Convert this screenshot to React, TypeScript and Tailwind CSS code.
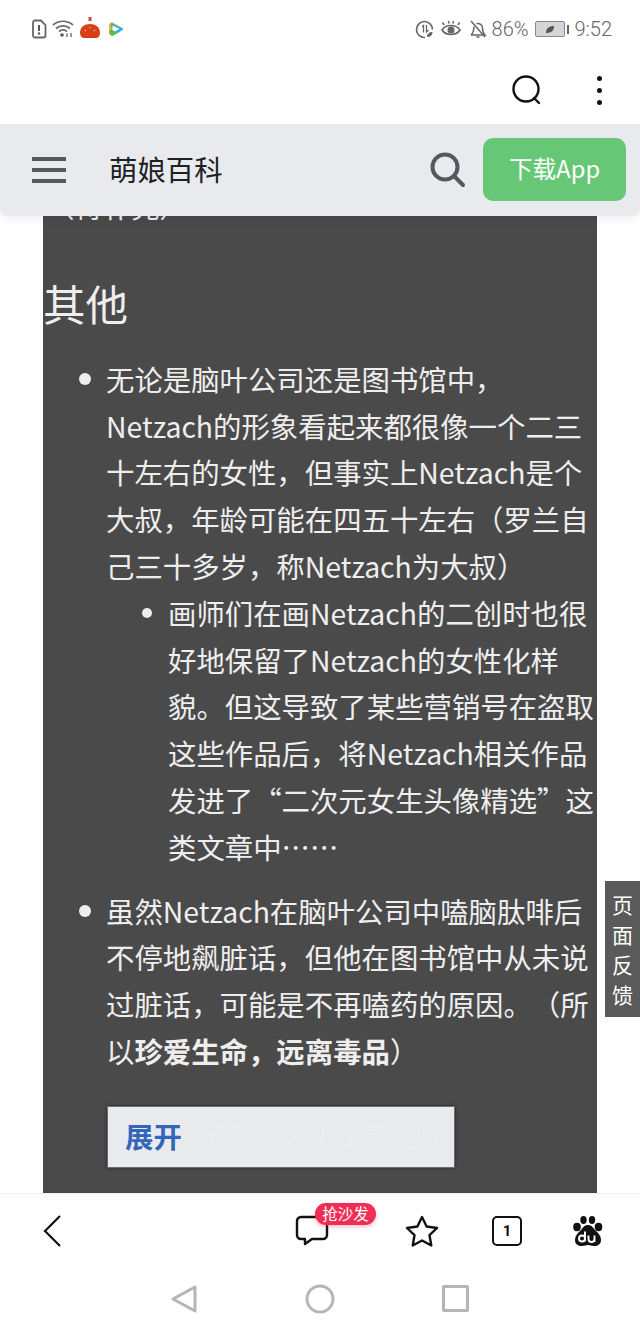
const cjk = "font-['Noto_Sans_CJK_SC','Noto_Sans',sans-serif]";

const StatusBar = () => (
  <div className="flex h-[58px] items-center justify-between pl-[31px] pr-[28px] text-[#666666]">
    <div className="flex items-center gap-[5px]">
      <svg width="16" height="20" viewBox="0 0 16 20" fill="none">
        <path d="M2 3.500a2 2 0 0 1 2-2h6l4.500 4.500v10.500a2 2 0 0 1-2 2h-8.500a2 2 0 0 1-2-2z" stroke="#666" strokeWidth="1.800" />
        <path d="M8 6v6" stroke="#555" strokeWidth="2" />
        <circle cx="8" cy="14.500" r="1.200" fill="#555" />
      </svg>
      <svg width="22" height="20" viewBox="0 0 22 20" fill="none" stroke="#666" strokeWidth="1.700">
        <path d="M1 6c5.500-5 14.500-5 20 0" />
        <path d="M4 9.500c4-3.500 10-3.500 14 0" />
        <path d="M7 12.500c2.500-2 5.500-2 8 0" />
        <circle cx="10" cy="16" r="1.800" fill="#555" stroke="none" />
        <path d="M15 14.500v3.500M19 14v4" strokeWidth="1.300" />
      </svg>
      <svg width="22" height="22" viewBox="0 0 22 22" className="-mt-[3px]">
        <rect x="9.500" y="0" width="3" height="4" fill="#d8482c" />
        <path d="M1 16c0-6 4.500-9 10-9s10 3 10 9c0 3-2 5-4 5h-12c-2 0-4-2-4-5z" fill="#d93f17" />
        <path d="M6 14l1-1M11 11v-1M16 14l-1-1" stroke="#f6c9a8" strokeWidth="1.200" />
      </svg>
      <svg width="16" height="16" viewBox="0 0 16 16" className="ml-[2px]">
        <path d="M1 3l3-2 11 6.500v1L4 15l-3-2z" fill="#f5b324" />
        <path d="M3 2l12 5.500v1L10 12 3 6z" fill="#27b3e8" />
        <path d="M4.500 4.500l7 3.500-7 3.500z" fill="#fff" />
        <path d="M2 8l8 4-6 3-2-2z" fill="#4dbb5f" />
      </svg>
    </div>
    <div className="flex items-center">
      <svg width="19" height="19" viewBox="0 0 19 19" fill="none" stroke="#666" strokeWidth="1.700">
        <path d="M10 17.500a8 8 0 1 1 7.500-8" />
        <path d="M7 6.500l1.500-1v7M11.500 5v7l2-2" strokeWidth="1.300" />
        <path d="M12 17c0-3 2-5 5.500-5 0 3-2 5-5.500 5z" fill="#666" stroke="none" />
      </svg>
      <svg width="20" height="18" viewBox="0 0 20 18" fill="none" stroke="#666" strokeWidth="1.700" className="ml-[7px]">
        <path d="M1 10c4-6 14-6 18 0-4 6-14 6-18 0z" />
        <circle cx="10" cy="10" r="3.500" fill="#666" stroke="none" />
        <path d="M3 5L1.500 2.500M8 3.500L7.500 1M12 3.500L12.500 1M17 5l1.500-2.500" strokeWidth="1.500" />
      </svg>
      <svg width="18" height="18" viewBox="0 0 18 18" fill="none" stroke="#666" strokeWidth="1.500" className="ml-[8px]">
        <path d="M2 15h14c-2-2-2.500-3-2.500-7a4.500 4.500 0 0 0-6-4.200M5 6.500C4.800 10 4.500 13 2 15" />
        <path d="M7.500 17h3M2 1l14 16" />
      </svg>
      <span className="ml-[5px] font-['Roboto',sans-serif] text-[20px] font-light leading-none">86%</span>
      <div className="ml-[6px] flex items-center gap-[2px]">
        <div className="flex h-[16px] w-[30px] items-center justify-center rounded-[2px] border border-[#888888] bg-[#d5d5d5]">
          <svg width="10" height="9" viewBox="0 0 10 9"><path d="M1 8C1 3 4 1 9 1c0 5-3 7-8 7z" fill="#555" /></svg>
        </div>
        <div className="h-[9px] w-[2px] bg-[#666666]" />
      </div>
      <span className="ml-[6px] font-['Roboto',sans-serif] text-[20px] font-light leading-none">9:52</span>
    </div>
  </div>
);

const BrowserTop = () => (
  <div className="flex h-[66px] items-center justify-end pb-[2px] pr-[23px]">
    <svg width="30" height="30" viewBox="0 0 30 30" fill="none" stroke="#111" strokeWidth="2.400" strokeLinecap="round" className="mr-[39px]">
      <circle cx="14" cy="14" r="12.500" />
      <path d="M22 23l5 5" />
    </svg>
    <div className="flex w-[36px] flex-col items-center gap-[7px]">
      <div className="h-[5px] w-[5px] rounded-full bg-[#111111]" />
      <div className="h-[5px] w-[5px] rounded-full bg-[#111111]" />
      <div className="h-[5px] w-[5px] rounded-full bg-[#111111]" />
    </div>
  </div>
);

const SiteNav = () => (
  <div className="relative z-10 flex h-[92px] items-center rounded-b-[8px] bg-[#e8eaee] pl-[32px] pr-[14px] shadow-[0_4px_8px_rgba(0,0,0,0.06)]">
    <div className="flex w-[34px] flex-col gap-[7px]">
      <div className="h-[4px] bg-[#54595d]" />
      <div className="h-[4px] bg-[#54595d]" />
      <div className="h-[4px] bg-[#54595d]" />
    </div>
    <span className={`-mt-[2px] ml-[43px] text-[28.400px] leading-none text-[#202122] ${cjk}`}>萌娘百科</span>
    <svg width="36" height="36" viewBox="0 0 36 36" fill="none" stroke="#54595d" strokeWidth="4" strokeLinecap="round" className="ml-auto mr-[17px]">
      <circle cx="15" cy="15" r="12.500" />
      <path d="M24 24l9 9" />
    </svg>
    <div className={`mb-[2px] flex h-[63px] w-[143px] items-center justify-center rounded-[10px] bg-[#66c776] text-[23.700px] text-white ${cjk}`}>
      下载App
    </div>
  </div>
);

const Article = () => (
  <div className={`ml-[43px] h-full w-[554px] overflow-hidden bg-[#4a4a4a] text-[28.400px] leading-[46.800px] text-[#eeeeee] [text-spacing-trim:space-all] ${cjk}`}>
    <p className="-mt-[33px] whitespace-nowrap pl-[3px]">（待补完）</p>
    <h2 className="mt-[45px] whitespace-nowrap text-[42.500px] leading-[56px]">其他</h2>
    <ul className="mt-[25px] list-none whitespace-nowrap pl-[63px]">
      <li className="relative">
        <span className="absolute -left-[27px] top-[17px] h-[12px] w-[12px] rounded-full bg-[#eeeeee]" />
        无论是脑叶公司还是图书馆中，<br />
        Netzach的形象看起来都很像一个二三<br />
        十左右的女性，但事实上Netzach是个<br />
        大叔，年龄可能在四五十左右（罗兰自<br />
        己三十多岁，称Netzach为大叔）
        <ul className="list-none pl-[62px]">
          <li className="relative">
            <span className="absolute -left-[26px] top-[18px] h-[10px] w-[10px] rounded-full bg-[#eeeeee]" />
            画师们在画Netzach的二创时也很<br />
            好地保留了Netzach的女性化样<br />
            貌。但这导致了某些营销号在盗取<br />
            这些作品后，将Netzach相关作品<br />
            发进了“二次元女生头像精选”这<br />
            类文章中……
          </li>
        </ul>
      </li>
      <li className="relative mt-[17px]">
        <span className="absolute -left-[27px] top-[17px] h-[12px] w-[12px] rounded-full bg-[#eeeeee]" />
        虽然Netzach在脑叶公司中嗑脑肽啡后<br />
        不停地飙脏话，但他在图书馆中从未说<br />
        过脏话，可能是不再嗑药的原因。（所<br />
        以<b className="font-bold">珍爱生命，远离毒品</b>）
      </li>
    </ul>
    <div className="ml-[64px] mt-[31px] flex h-[62px] w-[348px] items-center overflow-hidden whitespace-nowrap border border-[#6a6e72] bg-[#e8eaee] pl-[17px] shadow-[0_0_3px_rgba(0,0,0,0.5)]">
      <b className="font-bold text-[#3366bb]">展开</b>
      <b className="ml-[6px] font-bold text-[#eaecf0]">小孩子不可以学他哦</b>
    </div>
  </div>
);

const BottomBar = () => (
  <div className="relative flex h-[75px] items-center border-t border-[#f0f0f0] bg-white">
    <svg width="20" height="34" viewBox="0 0 20 34" fill="none" stroke="#111" strokeWidth="2.200" className="ml-[42px]">
      <path d="M18 2L3 17l15 15" />
    </svg>
    <div className="relative ml-[233px]">
      <svg width="34" height="32" viewBox="0 0 34 32" fill="none" stroke="#111" strokeWidth="2.400" strokeLinejoin="round">
        <path d="M6 2h22a4 4 0 0 1 4 4v14a4 4 0 0 1-4 4H17l-7 5v-5H6a4 4 0 0 1-4-4V6a4 4 0 0 1 4-4z" />
      </svg>
      <span className={`absolute -top-[12px] left-[20px] flex h-[22px] w-[61px] items-center justify-center rounded-full bg-[#f02d55] text-[15.500px] leading-none text-white shadow-[0_2px_4px_rgba(240,45,85,0.3)] ${cjk}`}>
        抢沙发
      </span>
    </div>
    <svg width="34" height="32" viewBox="0 0 34 32" fill="none" stroke="#111" strokeWidth="2.400" strokeLinejoin="round" className="ml-[76px]">
      <path d="M17 2l4.600 9.500 10.400 1.500-7.500 7.200 1.800 10.300L17 25.500 7.700 30.500l1.800-10.300L2 13l10.400-1.500z" />
    </svg>
    <div className="ml-[53px] flex h-[30px] w-[30px] items-center justify-center rounded-[5px] border-[2.400px] border-[#111111] font-['Roboto',sans-serif] text-[15px] font-bold leading-none text-[#111111]">
      1
    </div>
    <svg width="30" height="30" viewBox="0 0 30 30" className="ml-[51px]">
      <ellipse cx="4" cy="11" rx="3.800" ry="4.200" fill="#111" />
      <ellipse cx="10.500" cy="4" rx="3.200" ry="4" fill="#111" />
      <ellipse cx="19" cy="4" rx="3.200" ry="4" fill="#111" />
      <ellipse cx="25.500" cy="11" rx="3.800" ry="4.200" fill="#111" />
      <path d="M15 9c4 0 5 3 8 6 3 3 5 5 5 9 0 4-3 6-7 6-3 0-4-1-6-1s-3 1-6 1c-4 0-7-2-7-6 0-4 2-6 5-9 3-3 4-6 8-6z" fill="#111" />
      <path d="M12 15.500v10M12 22.500a3 3 0 1 1-6 0 3 3 0 1 1 6 0zM15.500 19.500v3.500a3 3 0 0 0 6 0v-3.500M21.500 23v3" fill="none" stroke="#fff" strokeWidth="1.900" />
    </svg>
  </div>
);

const NavKeys = () => (
  <div className="flex h-[62px] items-start justify-center bg-white pl-[2px]">
    <svg width="28" height="30" viewBox="0 0 28 30" fill="none" stroke="#b5b5b5" strokeWidth="3" strokeLinejoin="round" className="-ml-[3px] mt-[16px]">
      <path d="M25 3v24L3 15z" />
    </svg>
    <svg width="30" height="30" viewBox="0 0 30 30" fill="none" stroke="#b5b5b5" strokeWidth="3" className="ml-[107px] mt-[16px]">
      <circle cx="15" cy="15" r="13" />
    </svg>
    <div className="ml-[107px] mt-[17px] h-[27px] w-[27px] rounded-[2px] border-[3px] border-[#b5b5b5]" />
  </div>
);

export default function App() {
  return (
    <div className="relative flex h-[1330px] w-[640px] flex-col overflow-hidden bg-white">
      <StatusBar />
      <BrowserTop />
      <SiteNav />
      <div className="min-h-0 flex-1 overflow-hidden">
        <Article />
      </div>
      <BottomBar />
      <NavKeys />
      <div className={`absolute left-[605px] top-[881px] flex h-[136px] w-[35px] items-center justify-center bg-[#5a5a5a] text-center text-[21px] leading-[30px] text-white ${cjk}`}>
        页<br />面<br />反<br />馈
      </div>
    </div>
  );
}
